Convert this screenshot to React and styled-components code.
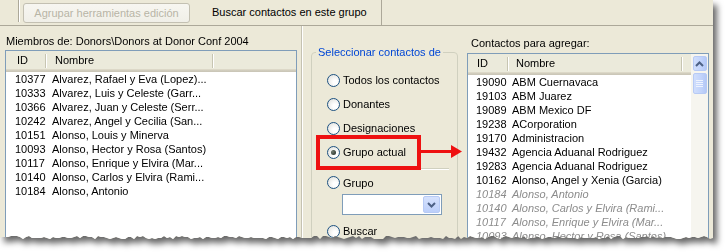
import React from 'react';
import styled, { createGlobalStyle } from 'styled-components';

const GlobalStyle = createGlobalStyle`
  html, body {
    margin: 0;
    padding: 0;
    background: #ffffff;
  }
  body {
    font-family: "Liberation Sans", Arial, sans-serif;
    font-size: 11px;
    color: #000;
  }
`;

// torn paper edge along the bottom of the capture
const tornEdge = (() => {
  const pts = ['0 0', '713px 0'];
  let seed = 11;
  const rnd = () => {
    seed = (seed * 9301 + 49297) % 233280;
    return seed / 233280;
  };
  for (let x = 713; x >= 0; x -= 3) {
    pts.push(`${x}px ${236 + Math.round(rnd() * 3)}px`);
  }
  pts.push('0 238px');
  return `polygon(${pts.join(', ')})`;
})();

const Stage = styled.div`
  width: 727px;
  height: 252px;
  overflow: hidden;
  background: #fff;
`;

const Shadowed = styled.div`
  width: 713px;
  filter: drop-shadow(4px 5px 3px rgba(0, 0, 0, 0.6));
`;

const Window = styled.div`
  position: relative;
  width: 713px;
  height: 244px;
  background: #ece9d8;
  clip-path: ${tornEdge};
  display: flex;
  flex-direction: column;
`;

const Toolbar = styled.div`
  height: 25px;
  flex: none;
  display: flex;
  align-items: stretch;
  border-bottom: 1px solid #aca899;
`;

const Grip = styled.div`
  width: 18px;
  height: 22px;
  border-right: 1px solid #aca899;
  box-shadow: 1px 0 0 #fff;
`;

const ToolButton = styled.button`
  margin: 3px 0 0 4px;
  width: 167px;
  height: 20px;
  padding: 0;
  border: 1px solid #c3c0b2;
  border-radius: 3px;
  background: linear-gradient(#f7f6f1, #f0efe8);
  color: #b8b5a6;
  font: inherit;
  font-size: 11px;
`;

const ToolLink = styled.div`
  width: 169px;
  padding-left: 22px;
  display: flex;
  align-items: center;
  border-right: 1px solid #aca899;
  white-space: nowrap;
  margin-top: -1px;
`;

const Main = styled.div`
  flex: 1;
  min-height: 0;
  display: flex;
  overflow: hidden;
`;

const LeftPane = styled.div`
  width: 302px;
  flex: none;
  display: flex;
  flex-direction: column;
  padding: 9px 4px 0 5px;
  box-sizing: border-box;
  border-right: 1px solid #c5c2b2;
  box-shadow: 1px 0 0 #fff;
`;

const MiddlePane = styled.div`
  width: 165px;
  flex: none;
  padding: 20px 0 0 9px;
  box-sizing: border-box;
`;

const RightPane = styled.div`
  width: 242px;
  flex: none;
  display: flex;
  flex-direction: column;
  padding-top: 11px;
`;

const PaneLabel = styled.div`
  height: 13px;
  line-height: 13px;
  padding-left: ${(p) => p.$indent || 1}px;
  margin-bottom: ${(p) => p.$gap || 3}px;
  white-space: nowrap;
`;

const ListBox = styled.div`
  flex: 1;
  display: flex;
  border: 1px solid #7f9db9;
  background: #fff;
`;

const ListBody = styled.div`
  flex: 1;
  min-width: 0;
`;

const Header = styled.div`
  height: 21px;
  display: flex;
  background: linear-gradient(
    #ebeadb 0,
    #ebeadb 18px,
    #e2decd 18px,
    #d6d2c2 19px,
    #cbc7b8 20px
  );
`;

const HeadCell = styled.div`
  position: relative;
  width: ${(p) => p.$w}px;
  flex: none;
  padding-left: ${(p) => p.$pl}px;
  box-sizing: border-box;
  line-height: 19px;
  &::after {
    content: '';
    position: absolute;
    right: 0;
    top: 3px;
    height: 14px;
    width: 1px;
    background: #c7c5b2;
    box-shadow: 1px 0 0 #fff;
  }
`;

const Row = styled.div`
  height: 14px;
  line-height: 14px;
  display: flex;
  white-space: nowrap;
  color: ${(p) => (p.$dim ? '#8c8c8c' : '#000')};
  font-style: ${(p) => (p.$dim ? 'italic' : 'normal')};
`;

const Cell = styled.div`
  width: ${(p) => p.$w}px;
  flex: none;
  padding-left: ${(p) => p.$pl}px;
  box-sizing: border-box;
  overflow: hidden;
`;

const ScrollTrack = styled.div`
  width: 17px;
  flex: none;
  background: #f6f5ef;
  padding-top: 2px;
  box-sizing: border-box;
  display: flex;
  flex-direction: column;
  align-items: center;
  gap: 2px;
`;

const ScrollBtn = styled.div`
  width: 14px;
  height: ${(p) => p.$h}px;
  border: 1px solid #b7caf5;
  border-radius: 2px;
  box-sizing: border-box;
  background: linear-gradient(90deg, #d0defc, #c1d3fb 60%, #b4c8f6);
  display: flex;
  align-items: center;
  justify-content: center;
`;

const GroupBox = styled.fieldset`
  margin: 0;
  padding: 0;
  width: 147px;
  height: 240px;
  box-sizing: border-box;
  border: 1px solid #d0d0bf;
  border-radius: 4px;
`;

const Legend = styled.legend`
  margin-left: 4px;
  padding: 0 2px;
  color: #0046d5;
  line-height: 13px;
  white-space: nowrap;
`;

const GroupContent = styled.div`
  padding: 9px 0 0 15px;
`;

const RadioRow = styled.div`
  height: ${(p) => p.$h || 24}px;
  display: flex;
  align-items: center;
  gap: 3px;
  white-space: nowrap;
`;

const Radio = styled.span`
  width: 13px;
  height: 13px;
  flex: none;
  border-radius: 50%;
  border: 1px solid #1c5180;
  box-sizing: border-box;
  background: radial-gradient(circle at 65% 65%, #ffffff 20%, #dcdcd7 100%);
  display: flex;
  align-items: center;
  justify-content: center;
  &::after {
    content: '';
    display: ${(p) => (p.$on ? 'block' : 'none')};
    width: 5px;
    height: 5px;
    border-radius: 50%;
    background: radial-gradient(circle at 35% 35%, #6f7a6f, #1e261e);
  }
`;

const Divider = styled.div`
  margin: 4px 0 2px -1px;
  width: 123px;
  height: 1px;
  background: #d0d0bf;
  box-shadow: 0 1px 0 #fff;
`;

const Combo = styled.div`
  margin-left: 15px;
  width: 100px;
  height: 21px;
  box-sizing: border-box;
  border: 1px solid #7f9db9;
  background: #fff;
  display: flex;
  justify-content: flex-end;
  padding: 1px;
  margin-bottom: 4px;
`;

const ComboBtn = styled.div`
  width: 17px;
  border: 1px solid #b7caf5;
  border-radius: 2px;
  box-sizing: border-box;
  background: linear-gradient(#d6e2fd, #bccffa);
  display: flex;
  align-items: center;
  justify-content: center;
`;

const Highlight = styled.div`
  position: absolute;
  left: 316px;
  top: 135px;
  width: 105px;
  height: 35px;
  box-sizing: border-box;
  border: 4px solid #ee1111;
`;

const Arrow = styled.svg`
  position: absolute;
  left: 421px;
  top: 144px;
`;

const leftRows = [
  ['10377', 'Alvarez, Rafael y Eva (Lopez)...'],
  ['10333', 'Alvarez, Luis y Celeste (Garr...'],
  ['10366', 'Alvarez, Juan y Celeste (Serr...'],
  ['10242', 'Alvarez, Angel y Cecilia (San...'],
  ['10151', 'Alonso, Louis y Minerva'],
  ['10093', 'Alonso, Hector y Rosa (Santos)'],
  ['10117', 'Alonso, Enrique y Elvira (Mar...'],
  ['10140', 'Alonso, Carlos y Elvira (Rami...'],
  ['10184', 'Alonso, Antonio'],
];

const rightRows = [
  ['19090', 'ABM Cuernavaca'],
  ['19103', 'ABM Juarez'],
  ['19089', 'ABM Mexico DF'],
  ['19238', 'ACorporation'],
  ['19170', 'Administracion'],
  ['19432', 'Agencia Aduanal Rodriguez'],
  ['19283', 'Agencia Aduanal Rodriguez'],
  ['10162', 'Alonso, Angel y Xenia (Garcia)'],
  ['10184', 'Alonso, Antonio', true],
  ['10140', 'Alonso, Carlos y Elvira (Rami...', true],
  ['10117', 'Alonso, Enrique y Elvira (Mar...', true],
  ['10093', 'Alonso, Hector y Rosa (Santos)', true],
];

function Chevron({ up }) {
  return (
    <svg width="9" height="6" viewBox="0 0 9 6">
      <path
        d={up ? 'M1 5 L4.5 1.5 L8 5' : 'M1 1 L4.5 4.5 L8 1'}
        fill="none"
        stroke="#4d6185"
        strokeWidth="2"
      />
    </svg>
  );
}

function Grip3() {
  return (
    <svg width="7" height="7" viewBox="0 0 7 7">
      {[0.5, 2.5, 4.5, 6.5].map((y) => (
        <line key={y} x1="0" x2="7" y1={y} y2={y} stroke="#eef3fe" strokeWidth="1" />
      ))}
    </svg>
  );
}

export default function App() {
  return (
    <Stage>
      <GlobalStyle />
      <Shadowed>
        <Window>
          <Toolbar>
            <Grip />
            <ToolButton disabled>Agrupar herramientas edición</ToolButton>
            <ToolLink>Buscar contactos en este grupo</ToolLink>
          </Toolbar>

          <Main>
            <LeftPane>
              <PaneLabel $gap={2}>Miembros de: Donors\Donors at Donor Conf 2004</PaneLabel>
              <ListBox>
                <ListBody>
                  <Header>
                    <HeadCell $w={40} $pl={11}>ID</HeadCell>
                    <HeadCell $w={167} $pl={9}>Nombre</HeadCell>
                  </Header>
                  {leftRows.map(([id, name]) => (
                    <Row key={id}>
                      <Cell $w={40} $pl={9}>{id}</Cell>
                      <Cell $w={240} $pl={6}>{name}</Cell>
                    </Row>
                  ))}
                </ListBody>
              </ListBox>
            </LeftPane>

            <MiddlePane>
              <GroupBox>
                <Legend>Seleccionar contactos de</Legend>
                <GroupContent>
                  <RadioRow><Radio />Todos los contactos</RadioRow>
                  <RadioRow><Radio />Donantes</RadioRow>
                  <RadioRow><Radio />Designaciones</RadioRow>
                  <RadioRow><Radio $on />Grupo actual</RadioRow>
                  <Divider />
                  <RadioRow $h={23}><Radio />Grupo</RadioRow>
                  <Combo>
                    <ComboBtn><Chevron /></ComboBtn>
                  </Combo>
                  <RadioRow><Radio />Buscar</RadioRow>
                </GroupContent>
              </GroupBox>
            </MiddlePane>

            <RightPane>
              <PaneLabel $indent={4}>Contactos para agregar:</PaneLabel>
              <ListBox>
                <ListBody>
                  <Header>
                    <HeadCell $w={40} $pl={9}>ID</HeadCell>
                    <HeadCell $w={174} $pl={8}>Nombre</HeadCell>
                  </Header>
                  {rightRows.map(([id, name, dim]) => (
                    <Row key={id + name} $dim={dim}>
                      <Cell $w={40} $pl={8}>{id}</Cell>
                      <Cell $w={182} $pl={4}>{name}</Cell>
                    </Row>
                  ))}
                </ListBody>
                <ScrollTrack>
                  <ScrollBtn $h={15}><Chevron up /></ScrollBtn>
                  <ScrollBtn $h={21}><Grip3 /></ScrollBtn>
                </ScrollTrack>
              </ListBox>
            </RightPane>
          </Main>

          <Highlight />
          <Arrow width="42" height="15" viewBox="0 0 42 15">
            <rect x="0" y="6" width="31" height="3" fill="#ee1111" />
            <polygon points="30,1 41,7.5 30,14" fill="#ee1111" />
          </Arrow>
        </Window>
      </Shadowed>
    </Stage>
  );
}
